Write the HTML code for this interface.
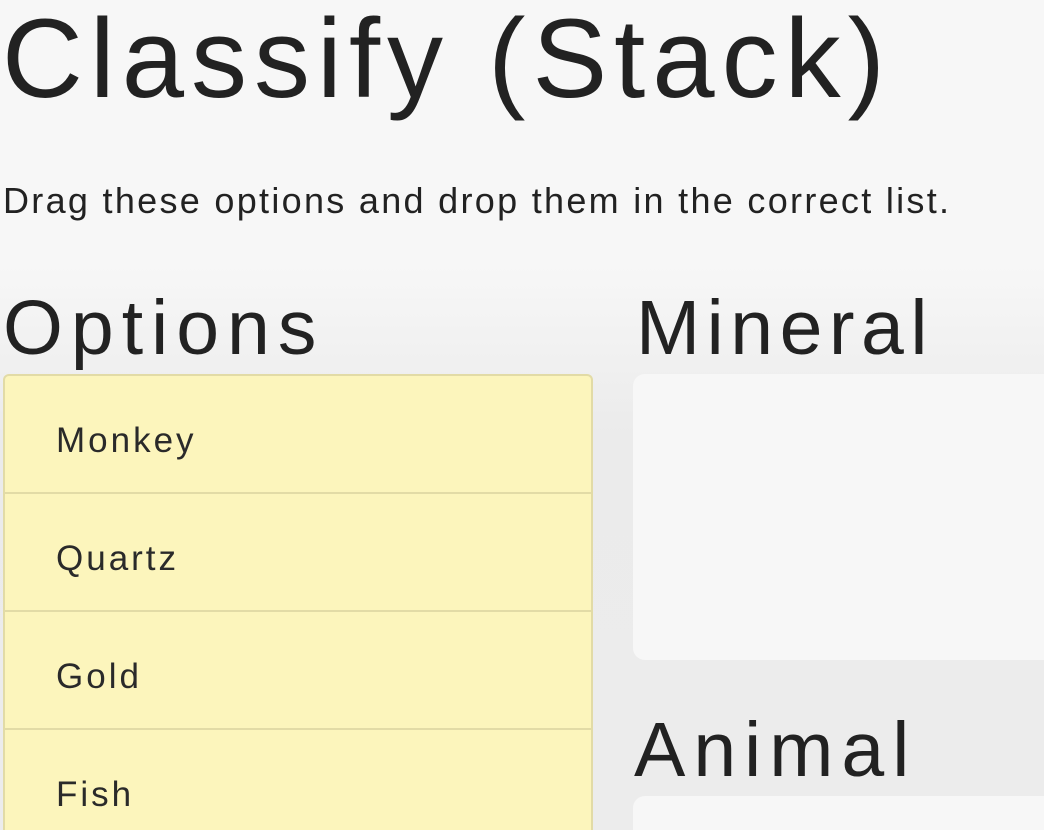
<!DOCTYPE html>
<html><head><style>
html,body{margin:0;padding:0;width:1044px;height:830px;overflow:hidden;background:#f7f7f7;font-family:"Liberation Sans",sans-serif;color:#222;}
#wrap{position:relative;width:1044px;height:830px;overflow:hidden;}
.t{position:absolute;white-space:nowrap;}
#sec{position:absolute;left:0;top:265px;width:1044px;height:565px;background:linear-gradient(#f7f7f7,#ebebeb 30%,#ececec);}
.box{position:absolute;background:#fcf5bc;border:2px solid #e2dba6;border-bottom:none;border-radius:6px 6px 0 0;left:3px;top:374px;width:590px;height:456px;box-sizing:border-box;overflow:hidden;}
.row{position:absolute;left:0;width:100%;height:118px;border-bottom:2px solid #e2dba6;box-sizing:border-box;font-size:35px;color:#2a2a2a;letter-spacing:3px;}
.row span{position:absolute;left:51px;top:45px;}
.drop{position:absolute;left:633px;width:411px;background:#f7f7f7;}
</style></head><body><div id="wrap">
<div class="t" style="left:2px;top:-6px;font-size:112px;letter-spacing:7px;">Classify (Stack)</div>
<div class="t" style="left:3px;top:180px;font-size:36px;letter-spacing:2.3px;">Drag these options and drop them in the correct list.</div>
<div id="sec"></div>
<div class="t" style="left:3px;top:284px;font-size:77px;letter-spacing:8px;">Options</div>
<div class="t" style="left:636px;top:284px;font-size:77px;letter-spacing:6.5px;">Mineral</div>
<div class="box">
<div class="row" style="top:0"><span>Monkey</span></div>
<div class="row" style="top:118px"><span>Quartz</span></div>
<div class="row" style="top:236px"><span>Gold</span></div>
<div class="row" style="top:354px;border:none;height:100px"><span>Fish</span></div>
</div>
<div class="drop" style="top:374px;height:286px;border-radius:12px 0 0 12px;"></div>
<div class="t" style="left:634px;top:706px;font-size:77px;letter-spacing:8px;">Animal</div>
<div class="drop" style="top:796px;height:34px;border-radius:12px 0 0 0;"></div>
</div></body></html>
